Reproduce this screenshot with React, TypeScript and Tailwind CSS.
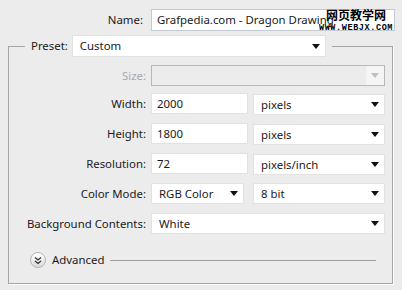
import React from "react";

const Arrow = ({ color = "#111" }: { color?: string }) => (
  <svg width="8" height="5" viewBox="0 0 8 5" className="shrink-0">
    <polygon points="0,0 8,0 4,5" fill={color} />
  </svg>
);

const Select = ({
  value,
  className = "",
}: {
  value: string;
  className?: string;
}) => (
  <div
    className={`flex h-[21px] items-center justify-between border border-[#e2e2e2] bg-white pl-[7px] pr-[5px] text-[#1a1a1a] ${className}`}
  >
    <span>{value}</span>
    <Arrow />
  </div>
);

const Input = ({ value, className = "" }: { value: string; className?: string }) => (
  <div
    className={`flex h-[21px] items-center border border-[#e2e2e2] bg-white pl-[5px] text-[#1a1a1a] ${className}`}
  >
    {value}
  </div>
);

const Label = ({ children, gray = false }: { children: React.ReactNode; gray?: boolean }) => (
  <div className={`w-[142px] shrink-0 text-right pr-[5px] ${gray ? "text-[#a8a8a8]" : "text-[#1a1a1a]"}`}>
    {children}
  </div>
);

export default function App() {
  return (
    <div
      className="relative h-[290px] w-[402px] overflow-hidden bg-[#ececec] text-[11.4px] leading-none"
      style={{ fontFamily: '"Noto Sans", Tahoma, sans-serif' }}
    >
      {/* Name row */}
      <div className="flex pt-[9px] items-center">
        <div className="w-[147px] pr-[4px] text-right text-[#1a1a1a]">Name:</div>
        <div className="ml-[4px] flex h-[22px] w-[244px] items-center overflow-hidden whitespace-nowrap border border-[#c3cad3] bg-white pl-[5px] text-[#1a1a1a]">
          Grafpedia.com - Dragon Drawing
        </div>
      </div>

      {/* Group box */}
      <fieldset className="ml-[8px] mt-[4px] w-[385px] border border-[#a6a6a6] pb-[15px] shadow-[1px_1px_0_#ffffff]">
        <legend className="ml-[16px] flex items-center px-[6px]">
          <span className="text-[#1a1a1a]">Preset:</span>
          <Select value="Custom" className="ml-[4px] w-[254px] h-[22px]" />
        </legend>

        <div className="mt-[8px] flex items-center">
          <Label gray>Size:</Label>
          <div className="flex h-[21px] w-[234px] items-center justify-end border border-[#b8b8b8] bg-[#ececec]">
            <div className="flex h-full w-[18px] items-center justify-center bg-[#f5f5f5]">
              <Arrow color="#c0c0c0" />
            </div>
          </div>
        </div>

        <div className="mt-[7px] flex items-start">
          <Label>
            <div className="flex h-[21px] items-center justify-end">Width:</div>
          </Label>
          <Input value="2000" className="w-[97px]" />
          <Select value="pixels" className="ml-[5px] w-[132px] mt-[1px]" />
        </div>

        <div className="mt-[8px] flex items-start">
          <Label>
            <div className="flex h-[21px] items-center justify-end">Height:</div>
          </Label>
          <Input value="1800" className="w-[97px]" />
          <Select value="pixels" className="ml-[5px] w-[132px] mt-[1px]" />
        </div>

        <div className="mt-[8px] flex items-start">
          <Label>
            <div className="flex h-[21px] items-center justify-end">Resolution:</div>
          </Label>
          <Input value="72" className="w-[97px]" />
          <Select value="pixels/inch" className="ml-[5px] w-[132px] mt-[1px]" />
        </div>

        <div className="mt-[8px] flex items-center">
          <Label>Color Mode:</Label>
          <Select value="RGB Color" className="w-[93px]" />
          <Select value="8 bit" className="ml-[9px] w-[132px]" />
        </div>

        <div className="mt-[9px] flex items-center">
          <Label>Background Contents:</Label>
          <Select value="White" className="w-[234px]" />
        </div>

        <div className="mt-[18px] flex h-[16px] items-center pl-[21px]">
          <div className="flex h-[16px] w-[16px] items-center justify-center rounded-full border border-[#b4b4b4] bg-gradient-to-b from-white to-[#dcdcdc]">
            <svg width="8" height="9" viewBox="0 0 8 9">
              <path d="M1 1.5 L4 4 L7 1.5 M1 5 L4 7.5 L7 5" fill="none" stroke="#333" strokeWidth="1.3" />
            </svg>
          </div>
          <span className="ml-[6px] text-[#1a1a1a]">Advanced</span>
          <div className="ml-[6px] h-px w-[266px] bg-[#a0a0a0]" />
        </div>
      </fieldset>

      {/* watermark */}
      <div className="absolute left-[320px] top-[8px] flex w-[72px] flex-col items-center">
        <div
          className="text-[12px] font-bold text-black leading-[14px]"
          style={{ fontFamily: '"Noto Sans CJK SC", sans-serif' }}
        >
          网页教学网
        </div>
        <div
          className="mt-[3px] text-[8.5px] font-bold leading-[7px] text-black tracking-[0.6px]"
          style={{ fontFamily: '"Liberation Mono", monospace' }}
        >
          WWW.WEBJX.COM
        </div>
      </div>
    </div>
  );
}
